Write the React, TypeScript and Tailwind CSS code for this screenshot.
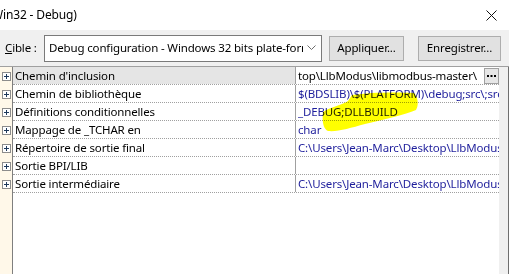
import React from "react";

type Row = { name: string; value: string; selected?: boolean };

const rows: Row[] = [
    { name: "Chemin d'inclusion", value: "top\\LlbModus\\libmodbus-master\\", selected: true },
    { name: "Chemin de bibliothèque", value: "$(BDSLIB)\\$(PLATFORM)\\debug;src\\;src\\win32" },
    { name: "Définitions conditionnelles", value: "_DEBUG;DLLBUILD" },
    { name: "Mappage de _TCHAR en", value: "char" },
    { name: "Répertoire de sortie final", value: "C:\\Users\\Jean-Marc\\Desktop\\LlbModus\\Win32" },
    { name: "Sortie BPI/LIB", value: "" },
    { name: "Sortie intermédiaire", value: "C:\\Users\\Jean-Marc\\Desktop\\LlbModus\\Win32" },
];

const font = { fontFamily: '"Noto Sans", "Open Sans", sans-serif' };

const PlusBox = () => (
    <div className="h-[18px] flex items-center justify-center">
        <svg width="9" height="9" viewBox="0 0 9 9">
            <rect x="0.5" y="0.5" width="8" height="8" fill="#fff" stroke="#8c8c8c" />
            <path d="M2 4.5h5M4.5 2v5" stroke="#1e395b" strokeWidth="1" />
        </svg>
    </div>
);

export default function App() {
    return (
        <div
            className="w-[509px] h-[274px] overflow-hidden bg-white flex flex-col text-[11.5px] tracking-[-0.15px] text-black"
            style={font}
        >
            {/* Title bar */}
            <div className="h-[30px] shrink-0 flex items-center justify-between pr-[12px] bg-white">
                <span className="-ml-[8px] leading-none text-[12px]">Win32 - Debug)</span>
                <svg width="11" height="11" viewBox="0 0 11 11">
                    <path d="M0.5 0.5l10 10M10.5 0.5l-10 10" stroke="#111" strokeWidth="1" />
                </svg>
            </div>

            {/* Target bar */}
            <div className="h-[36px] shrink-0 bg-[#f0f0f0] flex items-center pl-[5px]">
                <span className="w-[39px]">
                    <span className="underline">C</span>ible :
                </span>
                <div className="w-[278px] h-[27px] bg-white border border-[#7a7a7a] flex items-center pl-[4px] pr-[5px]">
                    <span className="flex-1 overflow-hidden whitespace-nowrap">
                        Debug configuration - Windows 32 bits plate-forme
                    </span>
                    <svg width="9" height="6" viewBox="0 0 9 6" className="ml-[4px]">
                        <path d="M0.5 0.5l4 4 4-4" fill="none" stroke="#6d6d6d" />
                    </svg>
                </div>
                <button className="ml-[7px] w-[75px] h-[25px] bg-[#e1e1e1] border border-[#adadad]">
                    Appliquer...
                </button>
                <button className="ml-[14px] w-[83px] h-[25px] bg-[#e1e1e1] border border-[#adadad]">
                    Enregistrer...
                </button>
            </div>

            {/* Property grid */}
            <div className="flex-1 flex border-t border-[#a0a0a0] relative">
                <div className="w-[13px] bg-[#fff8e9] border-r border-[#7f7f7f] flex flex-col">
                    {rows.map((r) => (
                        <PlusBox key={r.name} />
                    ))}
                </div>
                <div className="w-[486px] flex flex-col bg-white">
                    {rows.map((r) => (
                        <div key={r.name} className="h-[18px] flex border-b border-dotted border-[#a0a0a0]">
                            <div
                                className={`w-[283px] pl-[2px] flex items-center whitespace-nowrap overflow-hidden border-r border-[#a0a0a0] ${
                                    r.selected ? "bg-[#e5e5e5]" : ""
                                }`}
                            >
                                {r.name}
                            </div>
                            <div className="flex-1 flex items-center pl-[2px] overflow-hidden">
                                <span
                                    className={`flex-1 overflow-hidden whitespace-nowrap ${
                                        r.selected ? "text-black" : "text-[#1f1f9c]"
                                    }`}
                                >
                                    {r.value}
                                </span>
                                {r.selected && (
                                    <div className="w-[15px] h-[16px] bg-[#e6e6e6] border border-[#a0a0a0] flex items-center justify-center">
                                        <svg width="9" height="2" viewBox="0 0 9 2">
                                            <rect x="0" y="0" width="2" height="2" fill="#000" />
                                            <rect x="3.5" y="0" width="2" height="2" fill="#000" />
                                            <rect x="7" y="0" width="2" height="2" fill="#000" />
                                        </svg>
                                    </div>
                                )}
                            </div>
                        </div>
                    ))}
                </div>
                <div className="w-[10px] bg-[#f0f0f0] border-r border-[#6e6e6e]" />

                {/* highlighter mark */}
                <svg
                    className="absolute left-0 top-0 pointer-events-none mix-blend-multiply"
                    width="509"
                    height="208"
                    viewBox="0 66 509 208"
                >
                    <path
                        d="M352 94 C370 91 400 91 414 92 C418 96 419 104 416 109 C405 114 385 118 365 123 C350 127 338 131 328 130 C323 128 322 120 323 111 C330 106 342 104 348 100 Z"
                        fill="#ffff00"
                    />
                </svg>
            </div>
        </div>
    );
}
